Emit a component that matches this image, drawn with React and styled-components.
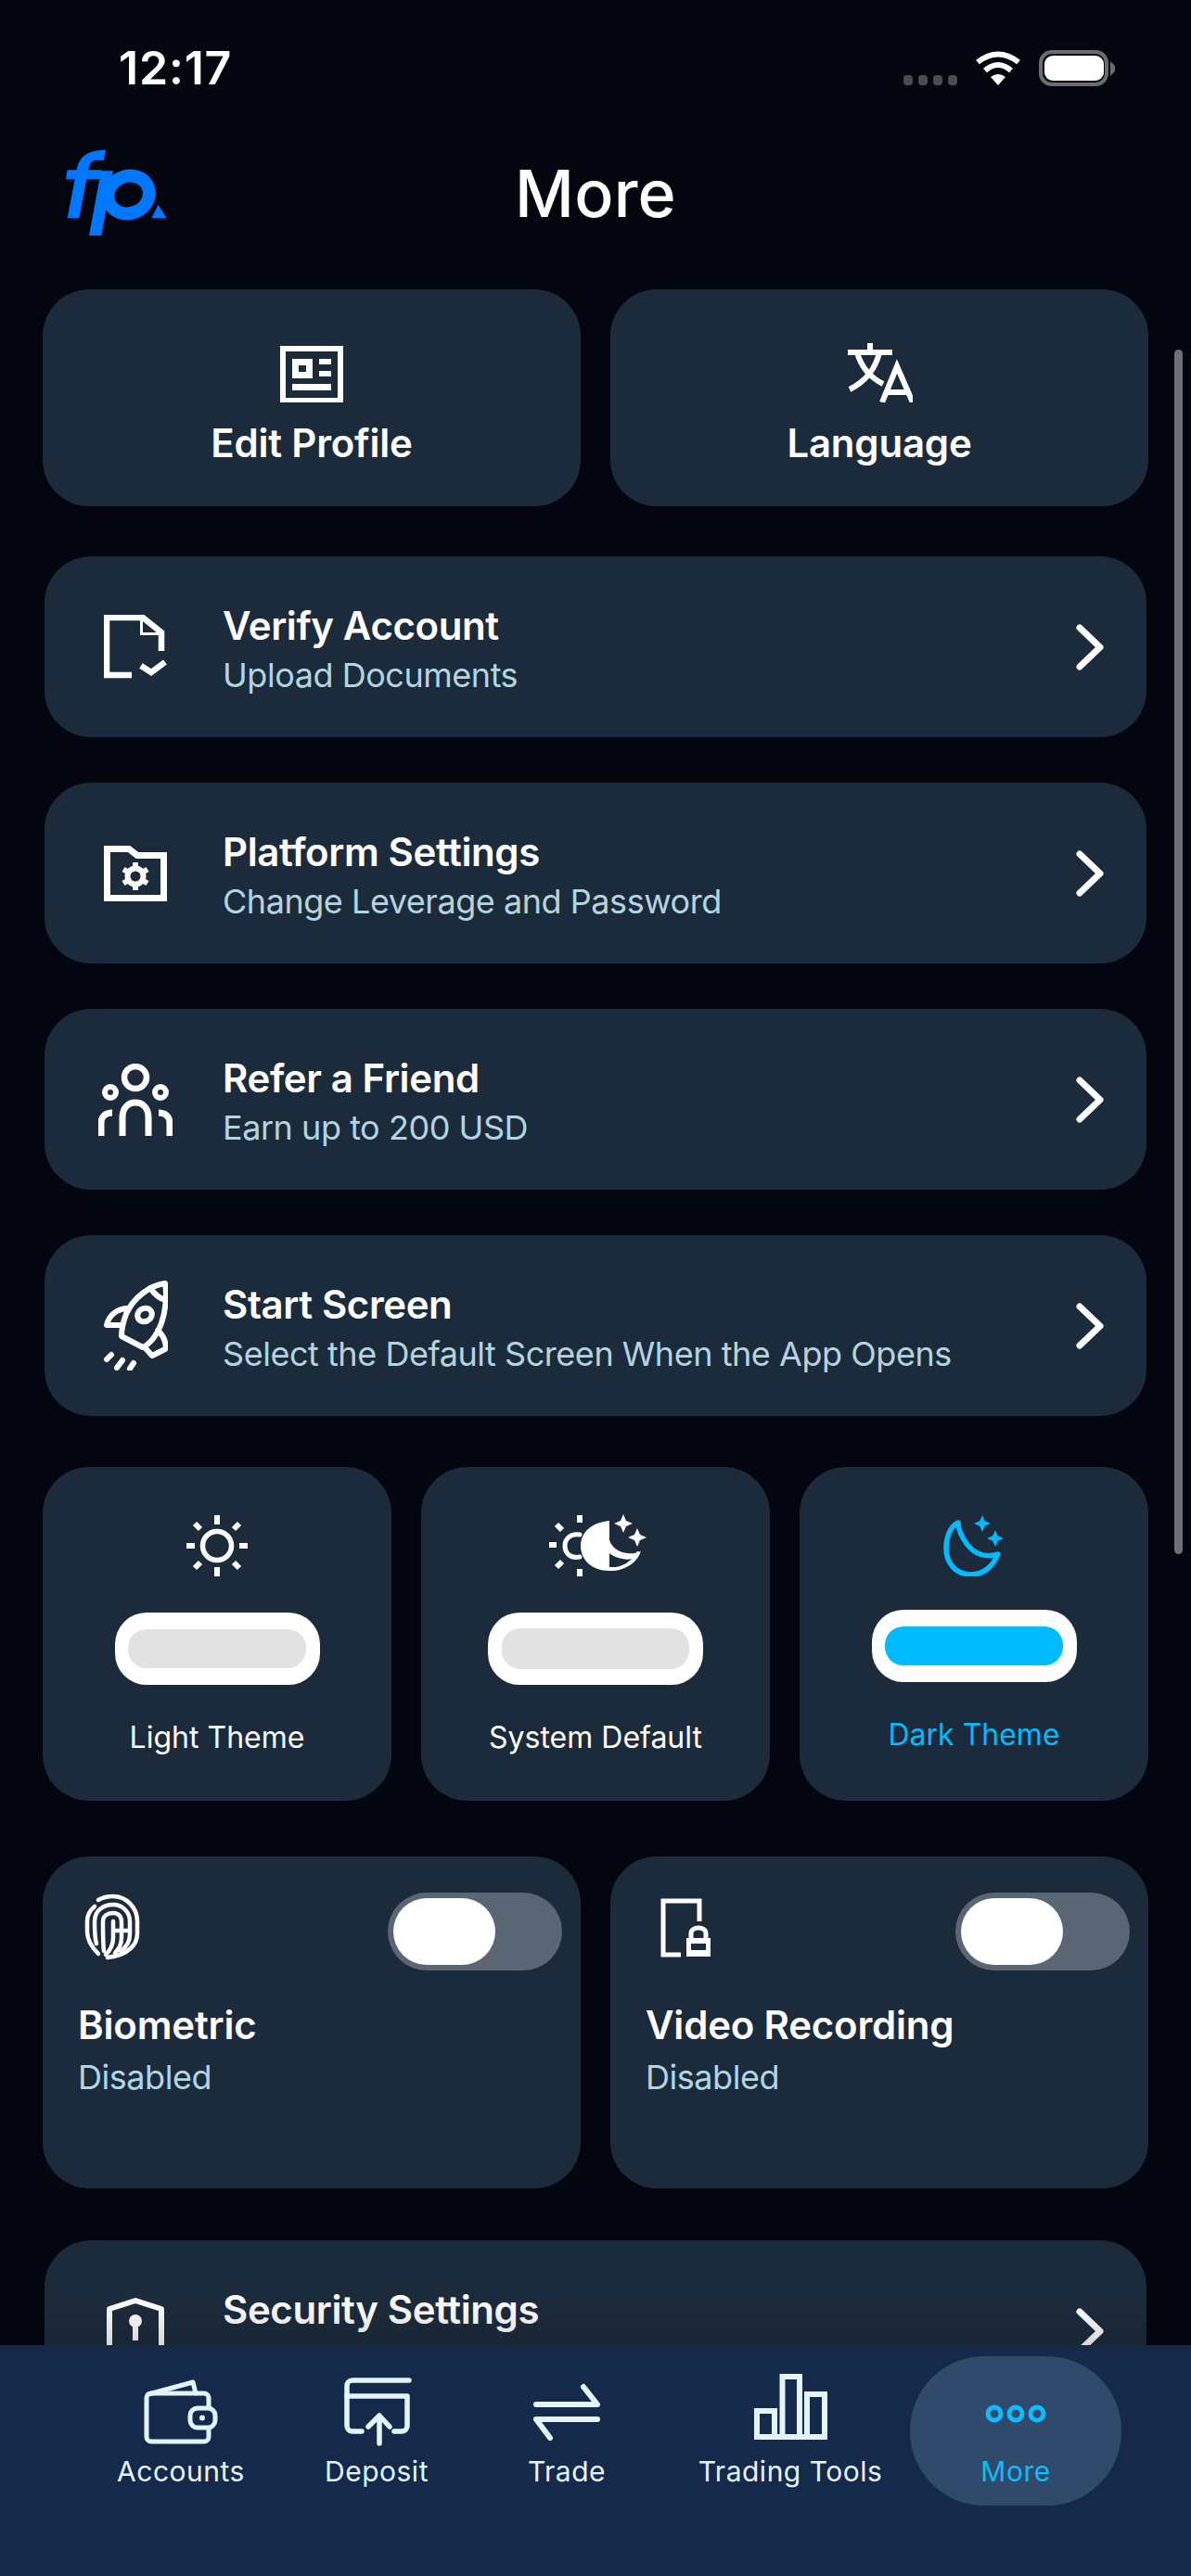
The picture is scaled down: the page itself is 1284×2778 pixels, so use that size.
import styled, { createGlobalStyle } from "styled-components";

const CARD = "#1c2b3c";
const ACCENT = "#00bbff";

const GlobalStyle = createGlobalStyle`
  html, body {
    margin: 0;
    padding: 0;
    background: #04060f;
  }
  * {
    box-sizing: border-box;
  }
`;

const Page = styled.div`
  position: relative;
  width: 1284px;
  height: 2778px;
  overflow: hidden;
  background: #04060f;
  color: #fff;
  font-family: Inter, "Liberation Sans", sans-serif;
`;

const StatusBar = styled.div`
  height: 146px;
  display: flex;
  align-items: center;
  justify-content: space-between;
  padding: 0 82px 0 128px;
`;

const Clock = styled.div`
  font-size: 50px;
  font-weight: 600;
  letter-spacing: 0.8px;
`;

const StatusIcons = styled.div`
  display: flex;
  align-items: center;
  gap: 19px;
`;

const SignalDots = styled.div`
  display: flex;
  gap: 6px;
  margin-top: 26px;
`;

const SignalDot = styled.span`
  width: 10px;
  height: 11px;
  border-radius: 4px;
  background: #4a4c53;
`;

const Header = styled.header`
  position: relative;
  height: 124px;
  display: flex;
  align-items: center;
  justify-content: center;
`;

const LogoMark = styled.svg`
  position: absolute;
  left: 60px;
  top: 4px;
`;

const PageTitle = styled.h1`
  margin: 0;
  font-size: 70px;
  font-weight: 500;
  letter-spacing: 0.2px;
`;

const Content = styled.main`
  padding: 42px 46px 0;
`;

const TwoColumns = styled.div`
  display: grid;
  grid-template-columns: 580px 580px;
  gap: 32px;
  margin-top: ${(p) => p.$top || 0}px;
`;

const ShortcutCard = styled.button`
  height: 234px;
  border: 0;
  border-radius: 50px;
  background: ${CARD};
  color: #fff;
  font-family: inherit;
  padding: 58px 0 0;
  display: flex;
  flex-direction: column;
  align-items: center;
`;

const ShortcutLabel = styled.span`
  margin-top: 19px;
  font-size: 42px;
  line-height: 50px;
  font-weight: 600;
  letter-spacing: -0.2px;
`;

const RowList = styled.div`
  display: flex;
  flex-direction: column;
  gap: 49px;
  margin: ${(p) => p.$top}px 2px 0;
`;

const Row = styled.div`
  height: 195px;
  border-radius: 50px;
  background: ${CARD};
  display: flex;
  align-items: center;
  padding: 5px 46px 0 58px;
`;

const RowIcon = styled.div`
  width: 80px;
  flex-shrink: 0;
  display: flex;
  justify-content: center;
  margin-top: -5px;
`;

const RowText = styled.div`
  flex: 1;
  margin-left: 54px;
`;

const RowTitle = styled.div`
  font-size: 42px;
  line-height: 50px;
  font-weight: 600;
  letter-spacing: -0.4px;
`;

const RowSub = styled.div`
  margin-top: 6px;
  font-size: 36px;
  line-height: 44px;
  color: #b2d5e0;
  letter-spacing: -0.46px;
`;

const Chevron = styled.svg`
  flex-shrink: 0;
  margin-top: -5px;
`;

const ThemeGrid = styled.div`
  display: grid;
  grid-template-columns: repeat(3, 376px);
  gap: 32px;
  margin-top: 55px;
`;

const ThemeCard = styled.div`
  height: 360px;
  border-radius: 50px;
  background: ${CARD};
  padding-top: 52px;
  display: flex;
  flex-direction: column;
  align-items: center;
  color: ${(p) => (p.$active ? ACCENT : "#fff")};
`;

const ThemeIcon = styled.div`
  height: 66px;
  display: flex;
  align-items: center;
  justify-content: center;
  svg {
    flex-shrink: 0;
  }
`;

const ThemeSwitch = styled.div`
  width: ${(p) => (p.$wide ? 232 : 221)}px;
  height: 78px;
  margin-top: ${(p) => (p.$active ? 36 : 39)}px;
  border-radius: 34px;
  background: #fff;
  display: flex;
  align-items: center;
  justify-content: center;
`;

const ThemeSwitchFill = styled.div`
  width: ${(p) => (p.$wide ? 202 : 192)}px;
  height: ${(p) => (p.$wide ? 44 : 42)}px;
  border-radius: 20px;
  background: ${(p) => (p.$active ? ACCENT : "#e2e2e2")};
`;

const ThemeLabel = styled.div`
  margin-top: 37px;
  font-size: 32px;
  line-height: 40px;
`;

const ToggleCard = styled.div`
  height: 358px;
  border-radius: 50px;
  background: ${CARD};
  padding: 39px 20px 0 44px;
`;

const ToggleTop = styled.div`
  display: flex;
  justify-content: space-between;
  align-items: flex-start;
`;

const Track = styled.div`
  width: 188px;
  height: 84px;
  padding: 6px;
  border-radius: 42px;
  background: #5b6675;
`;

const Knob = styled.div`
  width: 110px;
  height: 72px;
  border-radius: 36px;
  background: #fff;
`;

const ToggleTitle = styled.div`
  margin: 34px 0 0 -6px;
  font-size: 42px;
  line-height: 50px;
  font-weight: 600;
  letter-spacing: -0.2px;
`;

const ToggleSub = styled.div`
  margin: 9px 0 0 -6px;
  font-size: 36px;
  line-height: 44px;
  color: #b2d5e0;
  letter-spacing: -0.46px;
`;

const Scrollbar = styled.div`
  position: absolute;
  left: 1266px;
  top: 377px;
  width: 9px;
  height: 1299px;
  border-radius: 5px;
  background: #6f7076;
`;

const BottomNav = styled.nav`
  position: absolute;
  left: 0;
  right: 0;
  bottom: 0;
  height: 249px;
  background: #15294a;
  padding: 12px 0 0 77px;
  display: grid;
  grid-template-columns: 236px 186px 224px 258px 228px;
  align-items: start;
  &::before {
    content: "";
    position: absolute;
    left: 0;
    right: 0;
    top: -50px;
    height: 50px;
    background: linear-gradient(rgba(4, 6, 15, 0), rgba(4, 6, 15, 0.16));
  }
`;

const NavItem = styled.div`
  height: 161px;
  padding-top: 18px;
  border-radius: 80px;
  display: flex;
  flex-direction: column;
  align-items: center;
  background: ${(p) => (p.$active ? "#304a6c" : "transparent")};
  color: ${(p) => (p.$active ? "#0ebcff" : "#e3f4ff")};
`;

const NavIcon = styled.div`
  height: 84px;
  display: flex;
  justify-content: center;
`;

const NavLabel = styled.div`
  font-size: 30px;
  line-height: 44px;
  letter-spacing: 0.5px;
`;

function Icon({ w, h, box, stroke = 5, children }) {
  return (
    <svg
      width={w}
      height={h}
      viewBox={box || `0 0 ${w} ${h}`}
      fill="none"
      stroke="currentColor"
      strokeWidth={stroke}
      strokeLinecap="round"
      strokeLinejoin="round"
    >
      {children}
    </svg>
  );
}

function star(x, y, r) {
  const k = r * 0.3;
  return `M${x} ${y - r}L${x + k} ${y - k}L${x + r} ${y}L${x + k} ${y + k}L${x} ${y + r}L${x - k} ${y + k}L${x - r} ${y}L${x - k} ${y - k}Z`;
}

const Logo = () => (
  <LogoMark width="130" height="115" viewBox="0 0 390 345" fill="#0077ff">
    <path d="M38 100H68C76 58 100 35 162 35L156 68H130C116 68 110 80 106 100H150L144 130H100L76 256H38L62 130H33Z" />
    <path d="M147 103H186L148 312H108Z" />
    <ellipse cx="236" cy="180" rx="68" ry="60" fill="none" stroke="#0077ff" strokeWidth="42" transform="rotate(-22 236 180)" />
    <path d="M332 212L359 256H310Z" />
  </LogoMark>
);

const Wifi = () => (
  <svg width="50" height="37" viewBox="0 0 50 37" fill="none" stroke="#fff" strokeWidth="6">
    <path d="M3 12Q25 -5 47 12" />
    <path d="M11 21Q25 9 39 21" />
    <path d="M17 28Q25 22 33 28L25 37Z" fill="#fff" stroke="none" />
  </svg>
);

const Battery = () => (
  <svg width="82" height="39" viewBox="0 0 82 39">
    <rect x="2" y="2" width="71" height="35" rx="12" fill="none" stroke="#6b6c72" strokeWidth="4" />
    <rect x="6" y="6" width="64" height="27" rx="9" fill="#fff" />
    <path d="M77 12L82 17V23L77 28Z" fill="#6b6c72" />
  </svg>
);

const EditIcon = () => (
  <Icon w={68} h={64} box="0 -3 68 64" stroke={0}>
    <path
      fill="currentColor"
      fillRule="evenodd"
      d="M0 0H68V62H0ZM6 6V56H62V6ZM13 14H35V35H13ZM20 21V28H28V21ZM42 14H55V20H42ZM42 27H55V33H42ZM13 41H55V48H13Z"
    />
  </Icon>
);

const TranslateIcon = () => (
  <Icon w={72} h={64} box="-2 0 72 64" stroke={6}>
    <g strokeLinecap="butt" strokeLinejoin="miter">
      <path d="M0 10H48M24 0V10M34 10C30 28 18 42 2 50M10 10C15 28 26 38 38 44" />
      <path d="M37 64L53 25L70 64M42 53H65" />
    </g>
  </Icon>
);

const VerifyIcon = () => (
  <Icon w={68} h={70} stroke={6.5}>
    <g strokeLinecap="butt" strokeLinejoin="miter">
      <path d="M30 65H3V3H42L62 19V39" />
      <path d="M42 0V19H65V22H39V0Z" fill="currentColor" stroke="none" />
      <path d="M40 55L51 62L66 51" />
    </g>
  </Icon>
);

const FolderGearIcon = () => (
  <Icon w={68} h={60} stroke={7}>
    <path d="M3.500 3.500H27L36 10.500H64.500V56.500H3.500Z" strokeLinecap="butt" strokeLinejoin="miter" />
    <circle cx="34" cy="33" r="8.500" strokeWidth="6" />
    {[0, 60, 120, 180, 240, 300].map((a) => (
      <path key={a} d="M34 18V24" strokeWidth="6" strokeLinecap="butt" transform={`rotate(${a} 34 33)`} />
    ))}
  </Icon>
);

const PeopleIcon = () => (
  <Icon w={80} h={78} stroke={7}>
    <circle cx="40" cy="15" r="12" strokeWidth="6.500" />
    <circle cx="13" cy="31" r="6" strokeWidth="6" />
    <circle cx="67" cy="31" r="6" strokeWidth="6" />
    <g strokeLinecap="butt">
      <path d="M26 78V58C26 48 32 42 40 42C48 42 54 48 54 58V78" />
      <path d="M3 78V64C3 57 8 53 15 53" />
      <path d="M77 78V64C77 57 72 53 65 53" />
    </g>
  </Icon>
);

const RocketIcon = () => (
  <Icon w={69} h={97} stroke={6}>
    <path d="M66 3C50 5 32 18 24 36C21 44 19 54 19 60L42 72C50 68 58 58 62 46C67 32 68 14 66 3Z" />
    <path d="M50 8C54 14 60 19 66 21" />
    <ellipse cx="44" cy="37" rx="8" ry="7" transform="rotate(-30 44 37)" />
    <path d="M26 30C14 30 5 38 3 48L19 48" />
    <path d="M58 54C66 60 68 72 66 74L52 81L44 72" />
    <path d="M3 85L8 80M14 94L20 86M28 95L32 89" />
  </Icon>
);

const ShieldIcon = () => (
  <Icon w={62} h={72} stroke={6}>
    <path d="M3 12L31 3L59 12V68H3Z" />
    <circle cx="31" cy="25" r="7" fill="currentColor" stroke="none" />
    <path d="M31 28V46" strokeLinecap="butt" />
  </Icon>
);

const SunIcon = () => (
  <Icon w={66} h={66} stroke={5.5}>
    <circle cx="33" cy="33" r="15.5" />
    <g strokeWidth="6" strokeLinecap="butt">
      <path d="M33 0V10M33 56V66M0 33H9M57 33H66" />
      <path d="M9 9L15 15M57 9L51 15M9 57L15 51M57 57L51 51" />
    </g>
  </Icon>
);

const SystemIcon = () => (
  <Icon w={130} h={85} box="-2 0 130 85" stroke={4}>
    <g strokeWidth="6" strokeLinecap="butt">
      <path d="M46 9V17M46 67V75M13 41H21M21 19L27 25M21 65L27 59" />
    </g>
    <path d="M46 30C36 28 30 35 30 42C30 50 36 56 46 54" strokeWidth="5" />
    <path fill="currentColor" stroke="none" d="M78 15C58 17 47 28 47 42C47 58 60 69 78 69Z" />
    <path fill="currentColor" stroke="none" d="M78 36C82 48 98 54 112 48C108 56 100 58 92 56C86 55 80 52 78 50Z" />
    <path d="M78 67C92 68 104 60 109 50" />
    <path fill="currentColor" stroke="none" d={star(93, 18, 10)} />
    <path fill="currentColor" stroke="none" d={star(108, 33, 10)} />
  </Icon>
);

const MoonIcon = () => (
  <Icon w={66} h={66} stroke={5.5}>
    <path d="M16 8C6 13 3 26 3 36C3 52 14 64 30 64C44 64 54 54 59 42C46 46 34 42 26 32C20 24 16 16 16 8Z" />
    <path fill="currentColor" stroke="none" d={star(42, 9, 9)} />
    <path fill="currentColor" stroke="none" d={star(56, 25, 9)} />
  </Icon>
);

const FingerprintIcon = () => (
  <Icon w={64} h={75} box="10 11 64 75" stroke={4.5}>
    <path d="M26 19C31 16 36 15 42 15C56 15 68 27 68 42V55C68 66 60 78 36 81" />
    <path d="M22 26C17 30 14 36 14 42V53C14 62 20 71 26 77" />
    <path d="M24 66C22 60 22 50 22 42C22 30 32 24 42 24C52 24 60 32 60 42V56C60 64 56 70 50 74" />
    <path d="M32 74C31 66 31 50 31 42C31 36 36 33 42 33C48 33 51 37 51 43V60C51 66 48 72 44 76" />
    <path d="M42 42V60C42 68 38 74 34 78M42 52H60" />
  </Icon>
);

const DeviceLockIcon = () => (
  <Icon w={64} h={75} box="-10 -6 64 75" stroke={5}>
    <path d="M22 61H3V3H42V25" strokeLinecap="butt" strokeLinejoin="miter" />
    <path d="M33 43V38C33 30 49 30 49 38V43" strokeLinecap="butt" />
    <path
      fill="currentColor"
      fillRule="evenodd"
      stroke="none"
      d="M28 43H54V63H28ZM33 49V56H49V49Z"
    />
  </Icon>
);

const WalletIcon = () => (
  <Icon w={80} h={84}>
    <path d="M70 37V27A5 5 0 0 0 65 22H8A5 5 0 0 0 3 27V69A5 5 0 0 0 8 74H65A5 5 0 0 0 70 69V61" />
    <rect x="50" y="38" width="27" height="21" rx="8" />
    <circle cx="63" cy="48.5" r="3" fill="currentColor" stroke="none" />
    <path d="M5 23L53 10L56 22" />
  </Icon>
);

const DepositIcon = () => (
  <Icon w={76} h={84} stroke={5.5}>
    <path d="M73 8H12A6 6 0 0 0 6 14V57A6 6 0 0 0 12 63H22" />
    <path d="M6 25H71V57A6 6 0 0 1 65 63H57" />
    <path d="M41 76V47M29 58L41 46L52 58" />
  </Icon>
);

const TradeIcon = () => (
  <Icon w={72} h={84} stroke={6}>
    <path d="M3 34H69L54 15" />
    <path d="M69 50H3L18 70" />
  </Icon>
);

const ToolsIcon = () => (
  <Icon w={79} h={84} stroke={6}>
    <path strokeLinejoin="miter" d="M3 41H22V69H3ZM30.500 4H49V69H30.500ZM57 23H76V69H57Z" />
    <path strokeLinecap="butt" d="M2 69H77" />
  </Icon>
);

const DotsIcon = () => (
  <Icon w={66} h={84} stroke={5}>
    {[10, 33, 56].map((x) => (
      <circle key={x} cx={x} cy="44" r="7" />
    ))}
  </Icon>
);

const NextArrow = () => (
  <Chevron width="30" height="50" viewBox="0 0 30 50" fill="none" stroke="#fff" strokeWidth="7" strokeLinecap="round" strokeLinejoin="round">
    <path d="M4 4L26 25L4 46" />
  </Chevron>
);

const rows = [
  { title: "Verify Account", sub: "Upload Documents", icon: <VerifyIcon /> },
  { title: "Platform Settings", sub: "Change Leverage and Password", icon: <FolderGearIcon /> },
  { title: "Refer a Friend", sub: "Earn up to 200 USD", icon: <PeopleIcon /> },
  { title: "Start Screen", sub: "Select the Default Screen When the App Opens", icon: <RocketIcon /> },
];

const themes = [
  { label: "Light Theme", icon: <SunIcon /> },
  { label: "System Default", icon: <SystemIcon />, wide: true },
  { label: "Dark Theme", icon: <MoonIcon />, active: true },
];

const toggles = [
  { title: "Biometric", icon: <FingerprintIcon /> },
  { title: "Video Recording", icon: <DeviceLockIcon /> },
];

const navItems = [
  { label: "Accounts", icon: <WalletIcon /> },
  { label: "Deposit", icon: <DepositIcon /> },
  { label: "Trade", icon: <TradeIcon /> },
  { label: "Trading Tools", icon: <ToolsIcon /> },
  { label: "More", icon: <DotsIcon />, active: true },
];

export default function App() {
  return (
    <Page>
      <GlobalStyle />
      <StatusBar>
        <Clock>12:17</Clock>
        <StatusIcons>
          <SignalDots>
            <SignalDot />
            <SignalDot />
            <SignalDot />
            <SignalDot />
          </SignalDots>
          <Wifi />
          <Battery />
        </StatusIcons>
      </StatusBar>
      <Header>
        <Logo />
        <PageTitle>More</PageTitle>
      </Header>
      <Content>
        <TwoColumns>
          <ShortcutCard>
            <EditIcon />
            <ShortcutLabel>Edit Profile</ShortcutLabel>
          </ShortcutCard>
          <ShortcutCard>
            <TranslateIcon />
            <ShortcutLabel>Language</ShortcutLabel>
          </ShortcutCard>
        </TwoColumns>
        <RowList $top={54}>
          {rows.map((row) => (
            <Row key={row.title}>
              <RowIcon>{row.icon}</RowIcon>
              <RowText>
                <RowTitle>{row.title}</RowTitle>
                <RowSub>{row.sub}</RowSub>
              </RowText>
              <NextArrow />
            </Row>
          ))}
        </RowList>
        <ThemeGrid>
          {themes.map((theme) => (
            <ThemeCard key={theme.label} $active={theme.active}>
              <ThemeIcon>{theme.icon}</ThemeIcon>
              <ThemeSwitch $wide={theme.wide} $active={theme.active}>
                <ThemeSwitchFill $wide={theme.wide} $active={theme.active} />
              </ThemeSwitch>
              <ThemeLabel>{theme.label}</ThemeLabel>
            </ThemeCard>
          ))}
        </ThemeGrid>
        <TwoColumns $top={60}>
          {toggles.map((toggle) => (
            <ToggleCard key={toggle.title}>
              <ToggleTop>
                {toggle.icon}
                <Track>
                  <Knob />
                </Track>
              </ToggleTop>
              <ToggleTitle>{toggle.title}</ToggleTitle>
              <ToggleSub>Disabled</ToggleSub>
            </ToggleCard>
          ))}
        </TwoColumns>
        <RowList $top={56}>
          <Row>
            <RowIcon>
              <ShieldIcon />
            </RowIcon>
            <RowText>
              <RowTitle>Security Settings</RowTitle>
              <RowSub>&nbsp;</RowSub>
            </RowText>
            <NextArrow />
          </Row>
        </RowList>
      </Content>
      <Scrollbar />
      <BottomNav>
        {navItems.map((item) => (
          <NavItem key={item.label} $active={item.active}>
            <NavIcon>{item.icon}</NavIcon>
            <NavLabel>{item.label}</NavLabel>
          </NavItem>
        ))}
      </BottomNav>
    </Page>
  );
}
